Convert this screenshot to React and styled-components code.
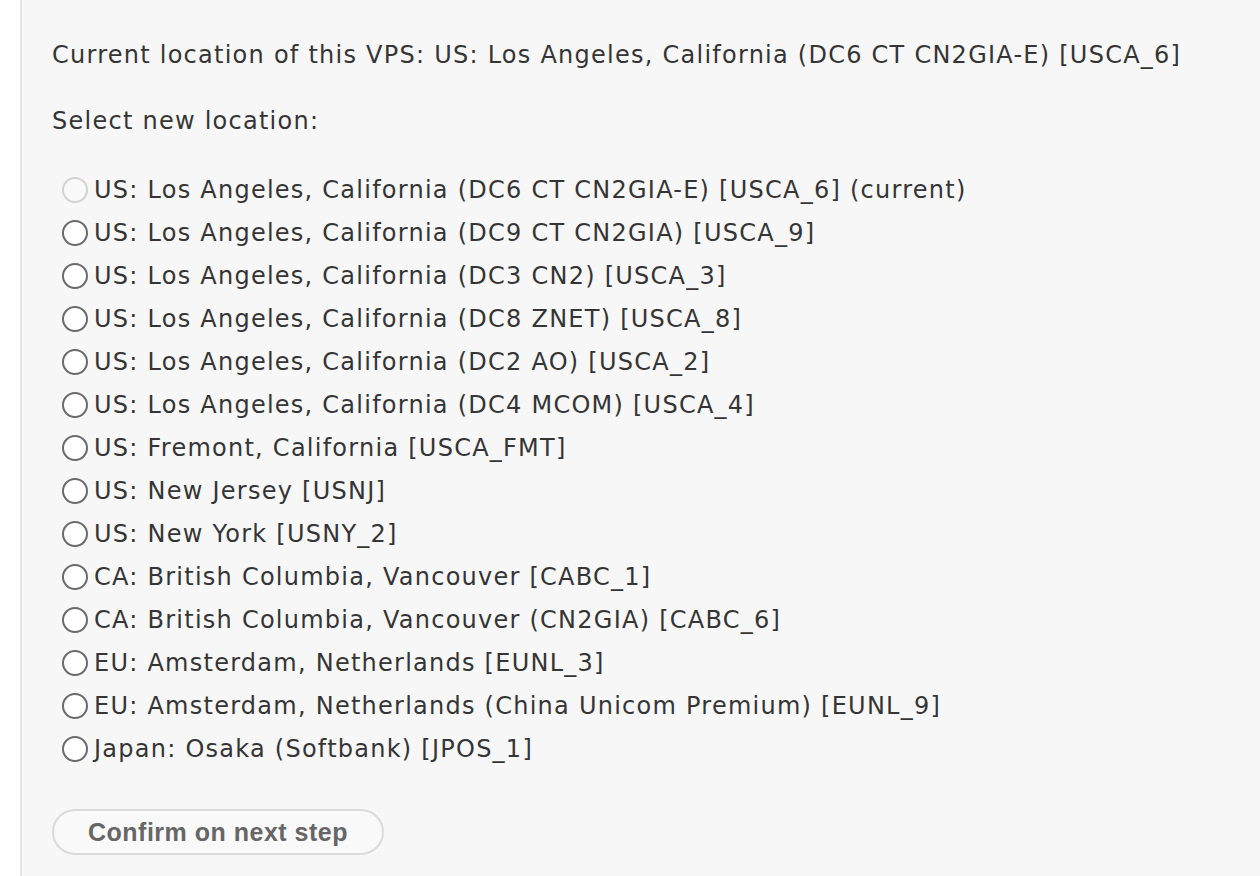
import React, { useState } from "react";
import styled, { createGlobalStyle } from "styled-components";

const locations = [
  { id: "USCA_6", label: "US: Los Angeles, California (DC6 CT CN2GIA-E) [USCA_6] (current)", current: true },
  { id: "USCA_9", label: "US: Los Angeles, California (DC9 CT CN2GIA) [USCA_9]" },
  { id: "USCA_3", label: "US: Los Angeles, California (DC3 CN2) [USCA_3]" },
  { id: "USCA_8", label: "US: Los Angeles, California (DC8 ZNET) [USCA_8]" },
  { id: "USCA_2", label: "US: Los Angeles, California (DC2 AO) [USCA_2]" },
  { id: "USCA_4", label: "US: Los Angeles, California (DC4 MCOM) [USCA_4]" },
  { id: "USCA_FMT", label: "US: Fremont, California [USCA_FMT]" },
  { id: "USNJ", label: "US: New Jersey [USNJ]" },
  { id: "USNY_2", label: "US: New York [USNY_2]" },
  { id: "CABC_1", label: "CA: British Columbia, Vancouver [CABC_1]" },
  { id: "CABC_6", label: "CA: British Columbia, Vancouver (CN2GIA) [CABC_6]" },
  { id: "EUNL_3", label: "EU: Amsterdam, Netherlands [EUNL_3]" },
  { id: "EUNL_9", label: "EU: Amsterdam, Netherlands (China Unicom Premium) [EUNL_9]" },
  { id: "JPOS_1", label: "Japan: Osaka (Softbank) [JPOS_1]" },
];

const App = () => {
  const [selected, setSelected] = useState(null);

  return (
    <>
      <GlobalStyle />
      <Page>
        <Content>
          <Paragraph>
            Current location of this VPS: US: Los Angeles, California (DC6 CT CN2GIA-E) [USCA_6]
          </Paragraph>
          <Paragraph>Select new location:</Paragraph>
          <List>
            {locations.map((loc) => (
              <Option key={loc.id}>
                <Radio
                  type="radio"
                  name="location"
                  value={loc.id}
                  disabled={loc.current}
                  checked={selected === loc.id}
                  onChange={() => setSelected(loc.id)}
                />
                {loc.label}
              </Option>
            ))}
          </List>
          <ConfirmButton type="button">Confirm on next step</ConfirmButton>
        </Content>
      </Page>
    </>
  );
};

export default App;

const GlobalStyle = createGlobalStyle`
  html, body {
    margin: 0;
    padding: 0;
    background-color: #ffffff;
  }
  * {
    box-sizing: border-box;
  }
`;

const Page = styled.div`
  display: flex;
  min-height: 876px;
  padding-left: 20px;
  background-color: #ffffff;
`;

const Content = styled.div`
  flex: 1;
  display: flex;
  flex-direction: column;
  align-items: flex-start;
  background-color: #f7f7f7;
  border-left: 2px solid #e4e4e4;
  padding: 37px 0 0 30px;
  font-family: "DejaVu Sans", Verdana, sans-serif;
  font-size: 24px;
  letter-spacing: 1.25px;
  color: #353535;
`;

const Paragraph = styled.p`
  margin: 0 0 30px;
  line-height: 36px;
  white-space: nowrap;
`;

const List = styled.div`
  display: flex;
  flex-direction: column;
  margin-top: -1px;
  margin-bottom: 39px;
`;

const Option = styled.label`
  display: flex;
  align-items: center;
  height: 43px;
  white-space: nowrap;
`;

const Radio = styled.input`
  appearance: none;
  width: 26px;
  height: 26px;
  margin: 0 6px 0 10px;
  border-radius: 50%;
  border: 2px solid #6a6a6a;
  background-color: #ffffff;
  flex: 0 0 auto;

  &:checked {
    background: radial-gradient(circle, #3a3a3a 0 6px, #ffffff 7px);
  }
  &:disabled {
    border: 2px solid #d2d2d2;
    background-color: #f9f9f9;
  }
`;

const ConfirmButton = styled.button`
  width: 332px;
  height: 46px;
  border: 2px solid #dadada;
  border-radius: 23px;
  background-color: #f9f9f9;
  font-family: "Liberation Sans", Arial, sans-serif;
  font-weight: 700;
  font-size: 25px;
  letter-spacing: 0.5px;
  color: #666666;
  cursor: pointer;
`;
